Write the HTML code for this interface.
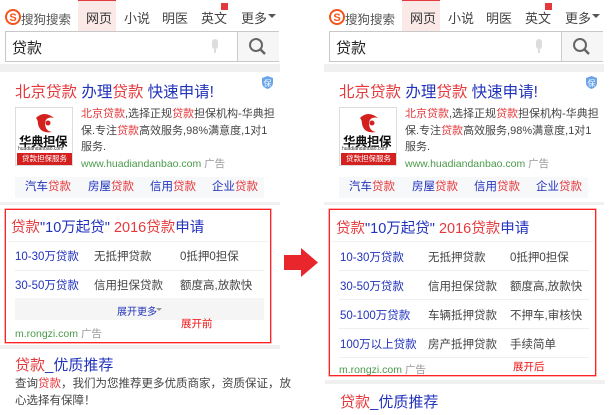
<!DOCTYPE html>
<html><head><meta charset="utf-8"><style>
*{margin:0;padding:0;box-sizing:border-box}
body{width:616px;height:415px;overflow:hidden;background:#fff;font-family:"Liberation Sans","Noto Sans CJK SC",sans-serif;position:relative;color:#333}
.p{position:absolute;top:0;width:282px;height:415px}
.a{position:absolute;white-space:nowrap}
.r{color:#e4393c}.b{color:#2233bb}.g{color:#4a9a4a}.gr{color:#999}
.tab{position:absolute;top:8px;font-size:13px;color:#444}
.row{position:absolute;font-size:11.5px;color:#444}
.line{position:absolute;height:1px;background:#eee}
.box{position:absolute;border:1px solid #f22;box-shadow:0 0 0 0.5px #f66}
.desc{position:absolute;left:81px;top:106px;white-space:nowrap;font-size:11px;line-height:16.5px;color:#444}
</style></head><body>

<svg class="a" style="left:284px;top:248px" width="35" height="30"><polygon points="0,7 17,7 17,0 34,14.5 17,29 17,22 0,22" fill="#e8262b"/></svg>

<div class="p" style="left:0">
 <div class="a" style="left:78px;top:0;width:38px;height:31px;background:#fbe9e7;border-top:1px solid #e4393c"></div>
 <svg class="a" style="left:5px;top:9px" width="16" height="16"><circle cx="8" cy="8" r="7" fill="none" stroke="#f2541c" stroke-width="2"/><text x="8" y="12" font-size="11" font-weight="bold" fill="#f2541c" text-anchor="middle" font-family="Liberation Sans">S</text></svg>
 <div class="a" style="left:21px;top:9px;font-size:12.5px;color:#555">搜狗搜索</div>
 <div class="tab" style="left:86px;color:#333">网页</div>
 <div class="tab" style="left:124px">小说</div>
 <div class="tab" style="left:162px">明医</div>
 <div class="tab" style="left:201px">英文</div>
 <div class="a" style="left:221px;top:3px;width:7px;height:7px;background:#e4393c"></div>
 <div class="tab" style="left:241px">更多</div>
 <div class="a" style="left:268px;top:14px;border:4px solid transparent;border-top-color:#555"></div>
 <div class="a" style="left:5px;top:31px;width:274px;height:31px;border:1px solid #c8c8c8"></div>
 <div class="a" style="left:237px;top:32px;width:42px;height:29px;background:#f6f6f6;border-left:1px solid #ccc"></div>
 <svg class="a" style="left:248px;top:37px" width="20" height="20"><circle cx="8" cy="8" r="6" fill="none" stroke="#666" stroke-width="2"/><line x1="12.5" y1="12.5" x2="17" y2="17" stroke="#666" stroke-width="2.5"/></svg>
 <div class="a" style="left:212px;top:39px;width:6px;height:10px;border-radius:3px;background:#ddd"></div>
 <div class="a" style="left:214px;top:49px;width:2px;height:4px;background:#ddd"></div>
 <div class="a" style="left:12px;top:37px;font-size:15px;color:#222">贷款</div>
 <div class="a" style="left:0;top:64px;width:280px;height:8px;background:#f0f0f0"></div>
 <svg class="a" style="left:262px;top:76px" width="11" height="13"><path d="M5.5 0 L11 2 V7 Q11 11 5.5 13 Q0 11 0 7 V2Z" fill="#6aa4e8"/><text x="5.5" y="10" font-size="8" fill="#fff" text-anchor="middle">保</text></svg>
 <div class="a" style="left:15px;top:80px;font-size:15.5px"><span class="r">北京贷款</span> <span class="b">办理</span><span class="r">贷款</span> <span class="b">快速申请!</span></div>
 <div class="a" style="left:15px;top:107px;width:58px;height:59px;border:1px solid #ddd;background:#fff">
  <svg class="a" style="left:18px;top:4px" width="22" height="22"><path d="M2 6 Q10 -2 20 6 Q12 4 11 11 Q11 19 18 20 Q6 22 4 12 Q4 8 2 6Z" fill="#d52020"/><circle cx="14" cy="11" r="2.5" fill="#d52020"/></svg>
  <div class="a" style="left:3px;top:23px;font-size:12.5px;font-weight:bold;color:#111;letter-spacing:-0.5px">华典担保</div>
  <div class="a" style="left:2px;top:38px;font-size:5px;color:#333">huadiandanbao.com</div>
  <div class="a" style="left:1px;top:45px;width:55px;height:12px;background:#d52020;color:#fff;font-size:7.5px;text-align:center;line-height:12px">贷款担保服务</div>
 </div>
 <div class="desc"><span class="r">北京贷款</span>,选择正规<span class="r">贷款</span>担保机构-华典担<br>保.专注<span class="r">贷款</span>高效服务,98%满意度,1对1<br>服务.</div>
 <div class="a" style="left:81px;top:156px;font-size:10.5px"><span class="g">www.huadiandanbao.com</span> <span class="gr">广告</span></div>
 <div class="a" style="left:15px;top:177px;width:249px;height:21px;background:#f7f8fa;font-size:11.5px;line-height:21px">
  <span class="a" style="left:10px"><span class="b">汽车</span><span class="r">贷款</span></span>
  <span class="a" style="left:73px"><span class="b">房屋</span><span class="r">贷款</span></span>
  <span class="a" style="left:135px"><span class="b">信用</span><span class="r">贷款</span></span>
  <span class="a" style="left:197px"><span class="b">企业</span><span class="r">贷款</span></span>
 </div>
 <div class="a" style="left:0;top:202px;width:280px;height:3px;background:#f0f0f0"></div>
</div>

<div class="p" style="left:324px">
 <div class="a" style="left:78px;top:0;width:38px;height:31px;background:#fbe9e7;border-top:1px solid #e4393c"></div>
 <svg class="a" style="left:5px;top:9px" width="16" height="16"><circle cx="8" cy="8" r="7" fill="none" stroke="#f2541c" stroke-width="2"/><text x="8" y="12" font-size="11" font-weight="bold" fill="#f2541c" text-anchor="middle" font-family="Liberation Sans">S</text></svg>
 <div class="a" style="left:21px;top:9px;font-size:12.5px;color:#555">搜狗搜索</div>
 <div class="tab" style="left:86px;color:#333">网页</div>
 <div class="tab" style="left:124px">小说</div>
 <div class="tab" style="left:162px">明医</div>
 <div class="tab" style="left:201px">英文</div>
 <div class="a" style="left:221px;top:3px;width:7px;height:7px;background:#e4393c"></div>
 <div class="tab" style="left:241px">更多</div>
 <div class="a" style="left:268px;top:14px;border:4px solid transparent;border-top-color:#555"></div>
 <div class="a" style="left:5px;top:31px;width:274px;height:31px;border:1px solid #c8c8c8"></div>
 <div class="a" style="left:237px;top:32px;width:42px;height:29px;background:#f6f6f6;border-left:1px solid #ccc"></div>
 <svg class="a" style="left:248px;top:37px" width="20" height="20"><circle cx="8" cy="8" r="6" fill="none" stroke="#666" stroke-width="2"/><line x1="12.5" y1="12.5" x2="17" y2="17" stroke="#666" stroke-width="2.5"/></svg>
 <div class="a" style="left:212px;top:39px;width:6px;height:10px;border-radius:3px;background:#ddd"></div>
 <div class="a" style="left:214px;top:49px;width:2px;height:4px;background:#ddd"></div>
 <div class="a" style="left:12px;top:37px;font-size:15px;color:#222">贷款</div>
 <div class="a" style="left:0;top:64px;width:280px;height:8px;background:#f0f0f0"></div>
 <svg class="a" style="left:262px;top:76px" width="11" height="13"><path d="M5.5 0 L11 2 V7 Q11 11 5.5 13 Q0 11 0 7 V2Z" fill="#6aa4e8"/><text x="5.5" y="10" font-size="8" fill="#fff" text-anchor="middle">保</text></svg>
 <div class="a" style="left:15px;top:80px;font-size:15.5px"><span class="r">北京贷款</span> <span class="b">办理</span><span class="r">贷款</span> <span class="b">快速申请!</span></div>
 <div class="a" style="left:15px;top:107px;width:58px;height:59px;border:1px solid #ddd;background:#fff">
  <svg class="a" style="left:18px;top:4px" width="22" height="22"><path d="M2 6 Q10 -2 20 6 Q12 4 11 11 Q11 19 18 20 Q6 22 4 12 Q4 8 2 6Z" fill="#d52020"/><circle cx="14" cy="11" r="2.5" fill="#d52020"/></svg>
  <div class="a" style="left:3px;top:23px;font-size:12.5px;font-weight:bold;color:#111;letter-spacing:-0.5px">华典担保</div>
  <div class="a" style="left:2px;top:38px;font-size:5px;color:#333">huadiandanbao.com</div>
  <div class="a" style="left:1px;top:45px;width:55px;height:12px;background:#d52020;color:#fff;font-size:7.5px;text-align:center;line-height:12px">贷款担保服务</div>
 </div>
 <div class="desc"><span class="r">北京贷款</span>,选择正规<span class="r">贷款</span>担保机构-华典担<br>保.专注<span class="r">贷款</span>高效服务,98%满意度,1对1<br>服务.</div>
 <div class="a" style="left:81px;top:156px;font-size:10.5px"><span class="g">www.huadiandanbao.com</span> <span class="gr">广告</span></div>
 <div class="a" style="left:15px;top:177px;width:249px;height:21px;background:#f7f8fa;font-size:11.5px;line-height:21px">
  <span class="a" style="left:10px"><span class="b">汽车</span><span class="r">贷款</span></span>
  <span class="a" style="left:73px"><span class="b">房屋</span><span class="r">贷款</span></span>
  <span class="a" style="left:135px"><span class="b">信用</span><span class="r">贷款</span></span>
  <span class="a" style="left:197px"><span class="b">企业</span><span class="r">贷款</span></span>
 </div>
 <div class="a" style="left:0;top:202px;width:280px;height:3px;background:#f0f0f0"></div>
</div>

<!-- left box -->
<div class="box" style="left:5px;top:209px;width:266px;height:134px"></div>
<div class="a" style="left:11px;top:216px;font-size:14.5px"><span class="r">贷款</span><span class="b">"10万起贷"</span> <span class="r">2016贷款</span><span class="b">申请</span></div>
<div class="line" style="left:7px;top:241px;width:262px;background:#f3f3f3"></div>
<div class="row" style="left:15px;top:248px;color:#2233bb">10-30万贷款</div>
<div class="row" style="left:94px;top:248px">无抵押贷款</div>
<div class="row" style="left:180px;top:248px">0抵押0担保</div>
<div class="line" style="left:15px;top:270px;width:249px"></div>
<div class="row" style="left:15px;top:277px;color:#2233bb">30-50万贷款</div>
<div class="row" style="left:94px;top:277px">信用担保贷款</div>
<div class="row" style="left:180px;top:277px">额度高,放款快</div>
<div class="a" style="left:15px;top:298px;width:249px;height:22px;background:#f5f5f5"></div>
<div class="a" style="left:117px;top:303px;font-size:10px;color:#2233bb">展开更多</div>
<div class="a" style="left:156px;top:308px;border:3px solid transparent;border-top-color:#999"></div>
<div class="a" style="left:181px;top:316px;font-size:10.5px;color:#f01010">展开前</div>
<div class="a" style="left:15px;top:326px;font-size:10.5px"><span class="g">m.rongzi.com</span> <span class="gr">广告</span></div>
<div class="a" style="left:0;top:345px;width:280px;height:4px;background:#f0f0f0"></div>
<div class="a" style="left:15px;top:354px;font-size:15px"><span class="r">贷款</span><span class="b">_优质推荐</span></div>
<div class="a" style="left:15px;top:376px;font-size:11.5px;line-height:17px;color:#444">查询<span class="r">贷款</span>，我们为您推荐更多优质商家，资质保证，放<br>心选择有保障！</div>

<!-- right box -->
<div class="box" style="left:329px;top:209px;width:267px;height:167px"></div>
<div class="a" style="left:336px;top:217px;font-size:14.5px"><span class="r">贷款</span><span class="b">"10万起贷"</span> <span class="r">2016贷款</span><span class="b">申请</span></div>
<div class="line" style="left:331px;top:241px;width:263px;background:#f3f3f3"></div>
<div class="row" style="left:340px;top:249px;color:#2233bb">10-30万贷款</div>
<div class="row" style="left:428px;top:249px">无抵押贷款</div>
<div class="row" style="left:510px;top:249px">0抵押0担保</div>
<div class="line" style="left:339px;top:270px;width:250px"></div>
<div class="row" style="left:340px;top:278px;color:#2233bb">30-50万贷款</div>
<div class="row" style="left:428px;top:278px">信用担保贷款</div>
<div class="row" style="left:510px;top:278px">额度高,放款快</div>
<div class="line" style="left:339px;top:299px;width:250px"></div>
<div class="row" style="left:340px;top:307px;color:#2233bb">50-100万贷款</div>
<div class="row" style="left:428px;top:307px">车辆抵押贷款</div>
<div class="row" style="left:510px;top:307px">不押车,审核快</div>
<div class="line" style="left:339px;top:328px;width:250px"></div>
<div class="row" style="left:340px;top:336px;color:#2233bb">100万以上贷款</div>
<div class="row" style="left:428px;top:336px">房产抵押贷款</div>
<div class="row" style="left:510px;top:336px">手续简单</div>
<div class="line" style="left:339px;top:357px;width:250px"></div>
<div class="a" style="left:513px;top:359px;font-size:10.5px;color:#f01010">展开后</div>
<div class="a" style="left:339px;top:362px;font-size:10.5px"><span class="g">m.rongzi.com</span> <span class="gr">广告</span></div>
<div class="a" style="left:325px;top:380px;width:280px;height:4px;background:#f0f0f0"></div>
<div class="a" style="left:340px;top:391px;font-size:15px"><span class="r">贷款</span><span class="b">_优质推荐</span></div>
</body></html>
